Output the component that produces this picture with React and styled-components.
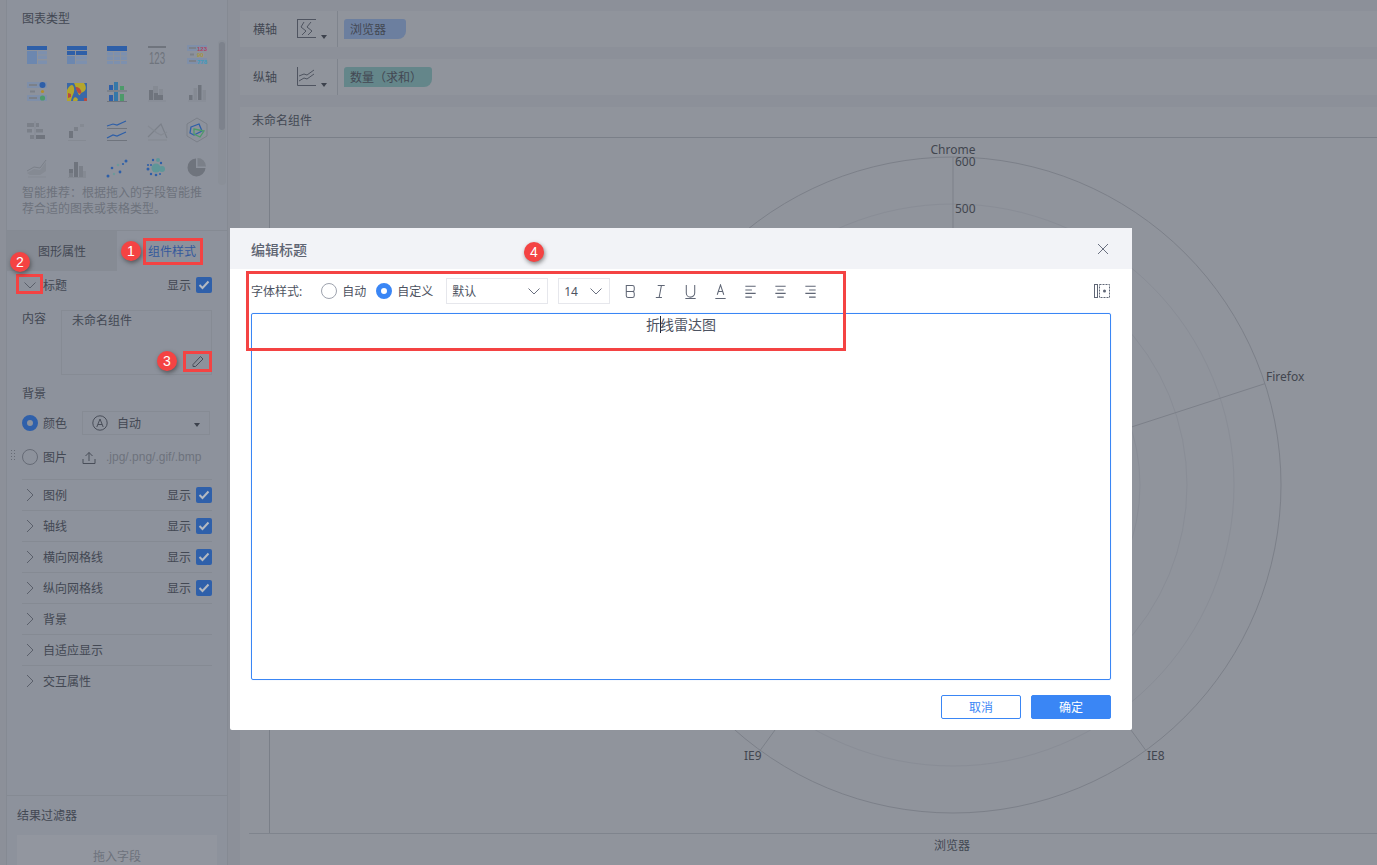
import React from 'react'
import styled, { createGlobalStyle } from 'styled-components'

const GlobalStyle = createGlobalStyle`
html, body {
  margin: 0;
  padding: 0;
  background: #8c9099;
  font-family: "Noto Sans", "Noto Sans CJK SC", sans-serif;
  font-size: 12px;
  color: #434853;
}
* { box-sizing: border-box; }
`

const Page = styled.div`
position: relative;
display: flex;
width: 1377px;
height: 865px;
overflow: hidden;
background: #8c9099;
`

/* left panel */
const Sidebar = styled.aside`
flex: none;
display: flex;
flex-direction: column;
width: 222px;
height: 865px;
margin-left: 6px;
background: #8d929c;
border-left: 1px solid #858a93;
border-right: 1px solid #858a93;
`
const ChartSection = styled.section`
flex: none;
height: 231px;
padding: 11px 0 0 10px;
border-bottom: 1px solid #858a93;
`
const Title = styled.div`
line-height: 16px;
color: #434853;
margin-left: ${({ $indent }) => $indent || 0}px;
`
const ChartBody = styled.div`
display: flex;
align-items: flex-start;
margin-top: 9px;
`
const ChartColumn = styled.div`
width: 201px;
`
const ChartGrid = styled.div`
display: grid;
grid-template-columns: repeat(5, 40px);
grid-auto-rows: 37.5px;
`
const ChartCell = styled.div`
display: flex;
align-items: center;
justify-content: center;
`
const Hint = styled.p`
margin: -1px 0 0 5px;
width: 190px;
line-height: 16px;
color: #6d727c;
`
const ScrollTrack = styled.div`
width: 8px;
height: 145px;
margin-top: 4px;
padding: 2px 1px;
border-radius: 4px;
background: #8a8f98;
`
const ScrollThumb = styled.div`
height: 88px;
border-radius: 3px;
background: #7d828c;
`
const Tabs = styled.div`
flex: none;
display: flex;
height: 40px;
`
const Tab = styled.div`
display: flex;
align-items: center;
justify-content: ${({ $active }) => ($active ? 'flex-start' : 'center')};
width: 110px;
color: ${({ $active }) => ($active ? '#34599c' : '#434853')};
background: ${({ $active }) => ($active ? 'transparent' : '#868b94')};
padding-left: ${({ $active }) => ($active ? 31 : 0)}px;
white-space: nowrap;
`
const Props = styled.div`
flex: 1;
padding: 0 15px;
`
const Row = styled.div`
display: flex;
align-items: center;
height: ${({ $h }) => $h || 24}px;
margin-top: ${({ $mt }) => $mt || 0}px;
white-space: nowrap;
`
const FoldRow = styled(Row)`
height: 31px;
border-top: 1px solid #858a93;
`
const ToggleGap = styled.span`
display: flex;
justify-content: center;
width: 21px;
padding-right: 5px;
flex: none;
`
const ShowLabel = styled.span`
margin-left: auto;
margin-right: 5px;
`
const CheckBox = styled.span`
flex: none;
display: flex;
align-items: center;
justify-content: center;
width: 16px;
height: 16px;
border-radius: 2px;
background: #2f60aa;
`
const Field = styled.div`
display: flex;
margin-top: 11px;
`
const FieldLabel = styled.span`
flex: none;
width: 39px;
line-height: 18px;
`
const FieldBox = styled.div`
display: flex;
flex-direction: column;
justify-content: space-between;
width: 151px;
height: 65px;
padding: 2px 6px 4px 10px;
border: 1px solid #868b94;
line-height: 16px;
`
const EditIcon = styled.span`
display: flex;
justify-content: flex-end;
`
const SideRadio = styled.span`
flex: none;
width: 16px;
height: 16px;
margin-right: 5px;
border-radius: 50%;
border: ${({ $on }) => ($on ? '5px solid #2f60aa' : '1px solid #666b76')};
`
const SideSelect = styled.div`
display: flex;
align-items: center;
width: 128px;
height: 24px;
margin-left: 15px;
padding: 0 9px 0 9px;
border: 1px solid #868b94;
`
const SelectText = styled.span`
margin-left: 9px;
`
const MiniCaret = styled.span`
margin-left: ${({ $ml }) => ($ml === undefined ? 'auto' : `${$ml}px`)};
margin-top: ${({ $top }) => $top || 0}px;
width: 0;
height: 0;
border-left: 3.5px solid transparent;
border-right: 3.5px solid transparent;
border-top: 4px solid #3d424d;
`
const ImageRow = styled(Row)`
position: relative;
margin-bottom: 10px;
`
const Grip = styled.span`
position: absolute;
left: -12px;
top: 4px;
width: 6px;
height: 12px;
background-image: radial-gradient(circle at center, #666b75 1px, transparent 1px);
background-size: 3px 3px;
`
const UploadSlot = styled.span`
display: flex;
margin: 0 10px 0 15px;
`
const FileTypes = styled.span`
font-family: "Liberation Sans", sans-serif;
color: #6d727c;
`
const Filter = styled.section`
flex: none;
height: 70px;
padding: 12px 10px 0;
overflow: hidden;
border-top: 1px solid #858a93;
`
const DropZone = styled.div`
width: 200px;
height: 40px;
margin-top: 11px;
padding-top: 12px;
text-align: center;
color: #6d727c;
background: #92969f;
`

/* main area */
const Main = styled.main`
flex: 1;
display: flex;
flex-direction: column;
min-width: 0;
padding: 11px 0 0 12px;
`
const AxisRow = styled.div`
flex: none;
display: flex;
align-items: center;
height: 36px;
margin-bottom: 12px;
padding-left: 13px;
background: #90949c;
`
const AxisName = styled.span`
width: 44px;
flex: none;
`
const AxisPick = styled.span`
flex: none;
display: flex;
align-items: flex-end;
width: 40px;
height: 20px;
`
const AxisDivider = styled.span`
flex: none;
width: 1px;
height: 36px;
margin-right: 6px;
background: #7f848d;
`
const Pill = styled.span`
display: flex;
align-items: center;
width: ${({ $w }) => $w}px;
height: 20px;
padding-left: 6px;
border-radius: 3px 3px 8px 0;
background: ${({ $bg }) => $bg};
white-space: nowrap;
`
const ChartPanel = styled.div`
flex: 1;
display: flex;
flex-direction: column;
min-height: 0;
padding-left: 9px;
background: #90949c;
`
const PanelTitle = styled.div`
flex: none;
display: flex;
align-items: center;
height: 31px;
padding: 0 0 4px 3px;
border-bottom: 1px solid #7a7f88;
`
const Plot = styled.div`
flex: none;
height: 695px;
margin-left: 20px;
border-left: 1px solid #7a7f88;
`
const PlotSvg = styled.svg`
display: block;
font-family: "Noto Sans", sans-serif;
font-size: 12px;
fill: #42464f;
`
const AxisTitle = styled.div`
flex: none;
height: 32px;
padding: 3px 0 0 685px;
line-height: 18px;
border-top: 1px solid #7f848d;
`

/* dialog */
const Dialog = styled.div`
position: absolute;
left: 230px;
top: 228px;
display: flex;
flex-direction: column;
width: 902px;
height: 502px;
background: #fff;
border-radius: 2px;
`
const DialogHead = styled.header`
flex: none;
display: flex;
align-items: center;
justify-content: space-between;
height: 41px;
padding: 0 23px 0 21px;
background: #f2f3f7;
font-size: 14px;
font-weight: 500;
color: #5e6472;
`
const CloseBtn = styled.button`
display: flex;
padding: 0;
border: none;
background: none;
`
const Toolbar = styled.div`
flex: none;
display: flex;
align-items: center;
height: 44px;
padding: 0 21px;
color: #4d5361;
`
const RadioItem = styled.label`
display: flex;
align-items: center;
margin-left: ${({ $ml }) => $ml}px;
`
const Radio = styled.span`
width: 16px;
height: 16px;
margin-right: 5px;
border-radius: 50%;
border: ${({ $on }) => ($on ? '5px solid #3a86f5' : '1px solid #9ea3ae')};
`
const Select = styled.div`
display: flex;
align-items: center;
justify-content: space-between;
width: ${({ $w }) => $w}px;
height: 26px;
margin-left: ${({ $ml }) => $ml}px;
padding: 0 6px 0 5px;
border: 1px solid #e6e7ec;
`
const ToolIcons = styled.div`
display: flex;
margin-left: 5px;
`
const ToolIcon = styled.span`
display: flex;
align-items: center;
justify-content: center;
width: 30px;
height: 20px;
`
const ExpandIcon = styled.span`
display: flex;
margin-left: auto;
margin-right: 1px;
`
const Editor = styled.div`
flex: 1;
margin: 0 21px;
padding-top: 1px;
border: 1px solid #3a86f5;
border-radius: 2px;
box-shadow: 0 0 1px #a9cbfb;
text-align: center;
font-size: 14px;
line-height: 20px;
color: #4d5361;
`
const Caret = styled.span`
display: inline-block;
width: 1px;
height: 17px;
margin-right: -1px;
vertical-align: -3px;
background: #1f2530;
`
const DialogFoot = styled.footer`
flex: none;
display: flex;
justify-content: flex-end;
gap: 10px;
height: 50px;
padding: 15px 21px 0 0;
`
const Button = styled.button`
width: 80px;
height: 24px;
padding: 0;
border: 1px solid #3a86f5;
border-radius: 2px;
font: inherit;
color: ${({ $primary }) => ($primary ? '#fff' : '#3a86f5')};
background: ${({ $primary }) => ($primary ? '#3a86f5' : '#fff')};
`

/* red notes drawn on top of the screenshot */
const NoteBox = styled.div`
position: absolute;
left: ${({ $x }) => $x}px;
top: ${({ $y }) => $y}px;
width: ${({ $w }) => $w}px;
height: ${({ $h }) => $h}px;
border: 3px solid #f44343;
`
const NoteDot = styled.div`
position: absolute;
left: ${({ $x }) => $x - 10}px;
top: ${({ $y }) => $y - 10}px;
display: flex;
align-items: center;
justify-content: center;
width: 20px;
height: 20px;
border-radius: 50%;
background: #f44343;
box-shadow: 1px 2px 4px rgba(40, 40, 40, 0.55);
color: #fff;
font-family: "Liberation Sans", sans-serif;
font-size: 14px;
`

const Chevron = ({ down, color = '#5a5f6a' }) => (
  <svg width="14" height="14" viewBox="0 0 14 14" fill="none" stroke={color} strokeWidth="1">
    {down ? <path d="M1.5 4.5 7 10 12.5 4.5" /> : <path d="M4 1 10 7 4 13" />}
  </svg>
)

const Tick = () => (
  <svg width="12" height="10" viewBox="0 0 12 10" fill="none" stroke="#b4b9c1" strokeWidth="2">
    <path d="M1.5 5 4.5 8 10.5 1.5" />
  </svg>
)

const Show = () => (
  <>
    <ShowLabel>显示</ShowLabel>
    <CheckBox><Tick /></CheckBox>
  </>
)

const B = '#2e5fa8'
const L = '#6c87af'
const M = '#7d90ae'
const G1 = '#6f747d'
const G2 = '#7b8089'
const G3 = '#858a93'

const Bars = ({ items }) => items.map(([x, y, w, h, c], i) => <rect key={i} x={x} y={y} width={w} height={h} fill={c} />)

const chartIcons = [
  <Bars items={[[5, 6, 20, 4, B], [5, 11, 10, 13, L], [16, 11, 9, 3.5, M], [16, 15.5, 9, 3.5, M], [16, 20.5, 9, 3.5, M]]} />,
  <Bars items={[[5, 6, 20, 4, B], [5, 11, 8, 4, B], [14, 11, 11, 4, B], [5, 16, 8, 8, L], [14, 16, 11, 3.5, M], [14, 20.5, 11, 3.5, M]]} />,
  <Bars items={[[5, 6, 20, 5, B], [5, 12, 6, 3.5, M], [12, 12, 6, 3.5, M], [19, 12, 6, 3.5, M], [5, 16.5, 6, 3.5, M], [12, 16.5, 6, 3.5, M], [19, 16.5, 6, 3.5, M], [5, 21, 6, 3, M], [12, 21, 6, 3, M], [19, 21, 6, 3, M]]} />,
  <>
    <rect x="6" y="6" width="18" height="2" fill={G1} />
    <text transform="translate(15 24) scale(.88 1.5)" textAnchor="middle" fontSize="11" fill={G1} fontFamily="Liberation Sans">123</text>
  </>,
  <>
    <Bars items={[[5, 5, 20, 6, '#7f8fa9'], [5, 18, 20, 6, '#7f8fa9'], [7, 7, 7, 2, G2], [8, 13.5, 4, 2, G2], [7, 20, 7, 2, G2]]} />
    <text x="15" y="10.5" fontSize="6" fontWeight="700" fill="#b2455e" fontFamily="Liberation Sans">123</text>
    <text x="15" y="17" fontSize="6" fontWeight="700" fill="#a8953f" fontFamily="Liberation Sans">90</text>
    <text x="15" y="23.5" fontSize="6" fontWeight="700" fill="#3f9bb8" fontFamily="Liberation Sans">778</text>
  </>,
  <>
    <Bars items={[[5, 5, 20, 6, '#7f8fa9'], [5, 18, 20, 6, '#7f8fa9'], [7, 7, 8, 2, G2], [8, 13.5, 5, 2, G2], [7, 20, 8, 2, G2]]} />
    <circle cx="20.5" cy="8" r="3" fill={B} />
    <circle cx="20.5" cy="14.5" r="1.6" fill="#b08f2c" />
    <circle cx="20.5" cy="21" r="2.6" fill="#4d9a6a" />
  </>,
  <>
    <rect x="5" y="6" width="20" height="18" fill="#3a68a8" />
    <path d="M5 13c3-5 6-7 7-2s-2 7-3 13H5z" fill="#b4a52c" />
    <path d="M12 6h10c3 4 2 8-1 9s-3 4-4 3-3-8-5-12z" fill="#b4a52c" />
    <path d="M15 10c3 1 5 4 4 6s-3 0-4-2-2-4 0-4z" fill="#b84a3f" />
    <path d="M6 16l3 1v3l-3 1zM22 21h3v3h-3z" fill="#b84a3f" />
    <path d="M11 24c0-3 2-5 4-3s0 3 0 3z" fill="#b4a52c" />
  </>,
  <Bars items={[[5, 13.5, 20, 1, G1], [5, 24, 20, 1, G1], [7, 8, 4, 5, B], [12, 5, 4, 8, '#3578a8'], [18, 9, 4, 4, '#4d9a6a'], [7, 18, 4, 6, B], [12, 15, 4, 9, '#3578a8'], [18, 17, 4, 7, '#4d9a6a']]} />,
  <Bars items={[[6, 23.5, 18, 1, G3], [7, 13, 5, 10, G1], [11, 9, 5, 14, G3], [12, 16, 4, 7, G1], [17, 12, 4, 11, G3], [16, 18, 5, 5, G1]]} />,
  <Bars items={[[6, 23.5, 18, 1, G3], [7, 18, 3.5, 5, G1], [11.5, 11, 3.5, 12, G3], [16, 8, 3.5, 15, G1], [20.5, 13, 3.5, 10, G3]]} />,
  <Bars items={[[5, 8, 7, 4, G2], [14, 8, 3, 4, G2], [5, 14, 5, 3.5, G2], [14, 14, 7, 3.5, G2], [8, 20, 4, 4, G2], [14, 20, 9, 4, G1], [12.5, 6, 1, 19, G3]]} />,
  <Bars items={[[6, 25, 18, 1, G3], [7, 16, 4, 7, G1], [12, 12, 4, 4, G2], [18, 9, 4, 3, G3]]} />,
  <g fill="none" stroke={B} strokeWidth="1.2">
    <path d="M5 11l6-2 4 1 9-4" />
    <path d="M5 23l6-3 4 1 9-4" />
    <path d="M5 13.5h20M5 25.5h20" stroke={G1} />
  </g>,
  <g fill="none" strokeWidth="1.2">
    <path d="M6 22 16 12l3-3 6 14" stroke={G2} />
    <path d="M6 11l9 7 4 2 6-3" stroke={G3} />
    <path d="M6 25h19" stroke={G3} />
  </g>,
  <g fill="none">
    <path d="M15 3 25 9v12l-10 6-10-6V9z" stroke={G2} />
    <path d="M9 12l8-3 3 7-8 4-4-2z" stroke={B} strokeWidth="1.3" />
    <path d="M12 14l10 2-4 6-6-3z" stroke="#4d9a6a" strokeWidth="1.3" />
  </g>,
  <>
    <path d="M5 21l7-4 6 1 6-8v9l-6 4H8z" fill={G3} />
    <path d="M5 19l7-4 6 1 6-8" fill="none" stroke={G2} strokeWidth="1" />
    <path d="M6 25h18" stroke={G3} />
  </>,
  <Bars items={[[6, 25, 18, 1, G3], [7, 17, 4, 8, G1], [12, 10, 4, 15, G1], [17, 14, 4, 11, G2], [7, 21, 4, 4, G2], [21, 19, 3, 6, G3]]} />,
  <>
    <circle cx="6" cy="24" r="1.5" fill={B} />
    <circle cx="10" cy="16" r="1.3" fill={B} />
    <circle cx="12" cy="22" r="1.2" fill="#6d9a9a" />
    <circle cx="16" cy="13" r="1.3" fill="#6d9a9a" />
    <circle cx="18" cy="20" r="1.4" fill={B} />
    <circle cx="21" cy="12" r="1.1" fill={B} />
    <circle cx="24" cy="9" r="1.5" fill={B} />
  </>,
  <>
    <circle cx="14" cy="16" r="4.5" fill="#5f9698" />
    <circle cx="20" cy="17" r="3" fill="#5f9698" />
    <circle cx="16" cy="8" r="2" fill="#5f9698" />
    <circle cx="19" cy="11" r="1.2" fill={B} />
    <circle cx="11" cy="8" r="1.2" fill={B} />
    <circle cx="6" cy="13" r="1.1" fill={B} />
    <circle cx="6" cy="17" r="1.5" fill={B} />
    <circle cx="9" cy="22" r="1.2" fill={B} />
    <circle cx="14" cy="23" r="1.3" fill={B} />
    <circle cx="18" cy="22" r="1" fill={B} />
    <circle cx="9" cy="13" r="1" fill={B} />
  </>,
  <>
    <path d="M14 6.5A9 9 0 1 0 23.5 16H14z" fill={G1} />
    <path d="M15.5 6a8.5 8.5 0 0 1 8.5 8.5h-8.5z" fill={G2} />
  </>,
]

const AxisIcon = ({ kind }) => (
  <svg width="19" height="20" viewBox="0 0 19 20" fill="none" stroke="#4f5460" strokeWidth="1">
    {kind === 'x' ? (
      <>
        <path d="M0 .5h19M0 18.5h19M.5 0v19" />
        <path d="M7 3 4 8l5 4-4 4M14 3l-4 5 5 4-4 4" />
      </>
    ) : (
      <>
        <path d="M.5 0v18.5H19" />
        <path d="M2 9l5-2 3 1 7-5M2 14l5-3 3 1 7-5" />
      </>
    )}
  </svg>
)

const ColorAuto = () => (
  <svg width="16" height="16" viewBox="0 0 16 16" fill="none" stroke="#494e59" strokeWidth="1">
    <circle cx="8" cy="8" r="7.2" />
    <path d="M4.8 12 8 4l3.2 8M6 9.5h4" />
  </svg>
)

const Upload = () => (
  <svg width="14" height="13" viewBox="0 0 14 13" fill="none" stroke="#494e59" strokeWidth="1">
    <path d="M7 10V1.5M3.5 5 7 1.5 10.5 5M1 8v4.5h12V8" />
  </svg>
)

const PencilLine = () => (
  <svg width="14" height="16" viewBox="0 0 14 16" fill="none" stroke="#474c58" strokeWidth="1">
    <path d="M2 10.5 9.5 2.5l2.5 2.500L4.5 12.5H2z" />
    <path d="M.5 15.5h13" />
  </svg>
)

const toolIcons = [
  <path d="M3.5 1.5H10a2 2 0 0 1 2 2V6a2 2 0 0 1-2 2 2 2 0 0 1 2 2v2.500a2 2 0 0 1-2 2H5.500a2 2 0 0 1-2-2zM3.500 8H10" />,
  <path d="M5 1.500h7.500M3 14.500h6.500M9 1.500 6.500 14.500" />,
  <path d="M3.500 1v8.500a4.500 4.500 0 0 0 9 0V1M2.500 15.500h11" />,
  <path d="M4.500 11.500 8 1l3.500 10.500M5.500 8h5M2.500 15.500h11" />,
  <path d="M2.500 2.500h11M2.500 6.500h7M2.500 10h11M2.500 14h7" />,
  <path d="M2.500 2.500h11M4.500 6.500h7M2.500 10h11M4.500 14h7" />,
  <path d="M2.500 2.500h11M6.500 6.500h7M2.500 10h11M6.500 14h7" />,
]

const folds = [
  ['图例', true],
  ['轴线', true],
  ['横向网格线', true],
  ['纵向网格线', true],
  ['背景', false],
  ['自适应显示', false],
  ['交互属性', false],
]

const cx = 683
const cy = 347
const rings = [328, 281, 234, 187]
const spokes = [0, 72, 144, 216]

const RadarPlot = () => (
  <PlotSvg width="1107" height="695">
    {rings.map((r, i) => (
      <circle key={r} cx={cx} cy={cy} r={r} fill="none" stroke={i === 0 ? '#7c8089' : '#898d96'} />
    ))}
    {spokes.map((deg) => {
      const a = (deg * Math.PI) / 180
      return (
        <line
          key={deg}
          x1={cx}
          y1={cy}
          x2={cx + 328 * Math.sin(a)}
          y2={cy - 328 * Math.cos(a)}
          stroke="#7c8089"
        />
      )
    })}
    <text x={683} y={16} textAnchor="middle">Chrome</text>
    <text x={685} y={28}>600</text>
    <text x={685} y={75}>500</text>
    <text x={996} y={243}>Firefox</text>
    <text x={474} y={622}>IE9</text>
    <text x={877} y={622}>IE8</text>
  </PlotSvg>
)

const App = () => {
  return (
    <Page>
      <GlobalStyle />
      <Sidebar>
        <ChartSection>
          <Title $indent={5}>图表类型</Title>
          <ChartBody>
            <ChartColumn>
              <ChartGrid>
                {chartIcons.map((icon, i) => (
                  <ChartCell key={i}>
                    <svg width="30" height="30" viewBox="0 0 30 30">{icon}</svg>
                  </ChartCell>
                ))}
              </ChartGrid>
              <Hint>智能推荐：根据拖入的字段智能推荐合适的图表或表格类型。</Hint>
            </ChartColumn>
            <ScrollTrack><ScrollThumb /></ScrollTrack>
          </ChartBody>
        </ChartSection>
        <Tabs>
          <Tab>图形属性</Tab>
          <Tab $active>组件样式</Tab>
        </Tabs>
        <Props>
          <Row $h={28}>
            <ToggleGap><Chevron down /></ToggleGap>
            标题
            <Show />
          </Row>
          <Field>
            <FieldLabel>内容</FieldLabel>
            <FieldBox>
              未命名组件
              <EditIcon><PencilLine /></EditIcon>
            </FieldBox>
          </Field>
          <Row $h={16} $mt={10}>背景</Row>
          <Row $mt={10}>
            <SideRadio $on />
            颜色
            <SideSelect>
              <ColorAuto />
              <SelectText>自动</SelectText>
              <MiniCaret $top={3} />
            </SideSelect>
          </Row>
          <ImageRow $mt={10}>
            <Grip />
            <SideRadio />
            图片
            <UploadSlot><Upload /></UploadSlot>
            <FileTypes>.jpg/.png/.gif/.bmp</FileTypes>
          </ImageRow>
          {folds.map(([name, show]) => (
            <FoldRow key={name}>
              <ToggleGap><Chevron /></ToggleGap>
              {name}
              {show && <Show />}
            </FoldRow>
          ))}
        </Props>
        <Filter>
          <Title>结果过滤器</Title>
          <DropZone>拖入字段</DropZone>
        </Filter>
      </Sidebar>

      <Main>
        <AxisRow>
          <AxisName>横轴</AxisName>
          <AxisPick>
            <AxisIcon kind="x" />
            <MiniCaret $ml={5} />
          </AxisPick>
          <AxisDivider />
          <Pill $w={62} $bg="#6c7f9f">浏览器</Pill>
        </AxisRow>
        <AxisRow>
          <AxisName>纵轴</AxisName>
          <AxisPick>
            <AxisIcon kind="y" />
            <MiniCaret $ml={5} />
          </AxisPick>
          <AxisDivider />
          <Pill $w={88} $bg="#64868a">数量（求和）</Pill>
        </AxisRow>
        <ChartPanel>
          <PanelTitle>未命名组件</PanelTitle>
          <Plot><RadarPlot /></Plot>
          <AxisTitle>浏览器</AxisTitle>
        </ChartPanel>
      </Main>

      <Dialog>
        <DialogHead>
          编辑标题
          <CloseBtn>
            <svg width="12" height="12" viewBox="0 0 12 12" fill="none" stroke="#6a7080" strokeWidth="1">
              <path d="M1 1l10 10M11 1 1 11" />
            </svg>
          </CloseBtn>
        </DialogHead>
        <Toolbar>
          字体样式:
          <RadioItem $ml={19}><Radio />自动</RadioItem>
          <RadioItem $ml={10}><Radio $on />自定义</RadioItem>
          <Select $w={102} $ml={13}>默认<Chevron down color="#6a7080" /></Select>
          <Select $w={52} $ml={10}>14<Chevron down color="#6a7080" /></Select>
          <ToolIcons>
            {toolIcons.map((d, i) => (
              <ToolIcon key={i}>
                <svg width="15" height="15" viewBox="0 0 16 16" fill="none" stroke="#5f6675" strokeWidth="1.1">{d}</svg>
              </ToolIcon>
            ))}
          </ToolIcons>
          <ExpandIcon>
            <svg width="16" height="14" viewBox="0 0 16 14" fill="none" stroke="#5f6675" strokeWidth="1">
              <rect x=".5" y=".5" width="3" height="13" />
              <rect x="5.5" y=".5" width="10" height="13" strokeDasharray="2 1" />
              <circle cx="10.5" cy="7" r="1.5" fill="#5f6675" stroke="none" />
            </svg>
          </ExpandIcon>
        </Toolbar>
        <Editor>折<Caret />线雷达图</Editor>
        <DialogFoot>
          <Button>取消</Button>
          <Button $primary>确定</Button>
        </DialogFoot>
      </Dialog>

      <NoteBox $x={143} $y={238} $w={60} $h={27} />
      <NoteBox $x={16} $y={274} $w={27} $h={20} />
      <NoteBox $x={183} $y={351} $w={29} $h={21} />
      <NoteBox $x={246} $y={271} $w={600} $h={80} />
      <NoteDot $x={131} $y={251}>1</NoteDot>
      <NoteDot $x={20} $y={262}>2</NoteDot>
      <NoteDot $x={167} $y={361}>3</NoteDot>
      <NoteDot $x={534} $y={252}>4</NoteDot>
    </Page>
  )
}

export default App
